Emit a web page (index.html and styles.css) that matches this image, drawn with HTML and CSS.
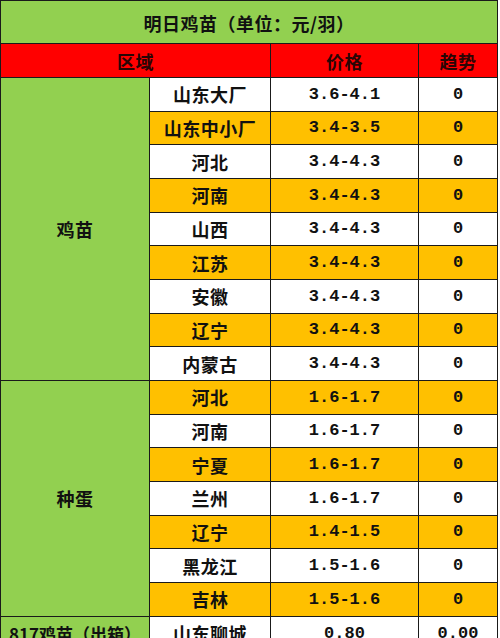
FILE: index.html
```html
<!DOCTYPE html>
<html lang="zh">
<head>
<meta charset="utf-8">
<title>明日鸡苗</title>
<link rel="stylesheet" href="styles.css">
</head>
<body>
<div class="sheet">
  <div class="cell title">明日鸡苗（单位：元/羽）</div>

  <div class="cell head span2">区域</div>
  <div class="cell head">价格</div>
  <div class="cell head">趋势</div>

  <div class="cell group g1">鸡苗</div>
  <div class="cell w">山东大厂</div><div class="cell w num">3.6-4.1</div><div class="cell w num">0</div>
  <div class="cell o">山东中小厂</div><div class="cell o num">3.4-3.5</div><div class="cell o num">0</div>
  <div class="cell w">河北</div><div class="cell w num">3.4-4.3</div><div class="cell w num">0</div>
  <div class="cell o">河南</div><div class="cell o num">3.4-4.3</div><div class="cell o num">0</div>
  <div class="cell w">山西</div><div class="cell w num">3.4-4.3</div><div class="cell w num">0</div>
  <div class="cell o">江苏</div><div class="cell o num">3.4-4.3</div><div class="cell o num">0</div>
  <div class="cell w">安徽</div><div class="cell w num">3.4-4.3</div><div class="cell w num">0</div>
  <div class="cell o">辽宁</div><div class="cell o num">3.4-4.3</div><div class="cell o num">0</div>
  <div class="cell w">内蒙古</div><div class="cell w num">3.4-4.3</div><div class="cell w num">0</div>

  <div class="cell group g2">种蛋</div>
  <div class="cell o">河北</div><div class="cell o num">1.6-1.7</div><div class="cell o num">0</div>
  <div class="cell w">河南</div><div class="cell w num">1.6-1.7</div><div class="cell w num">0</div>
  <div class="cell o">宁夏</div><div class="cell o num">1.6-1.7</div><div class="cell o num">0</div>
  <div class="cell w">兰州</div><div class="cell w num">1.6-1.7</div><div class="cell w num">0</div>
  <div class="cell o">辽宁</div><div class="cell o num">1.4-1.5</div><div class="cell o num">0</div>
  <div class="cell w">黑龙江</div><div class="cell w num">1.5-1.6</div><div class="cell w num">0</div>
  <div class="cell o">吉林</div><div class="cell o num">1.5-1.6</div><div class="cell o num">0</div>

  <div class="cell group tight">817鸡苗（出箱）</div>
  <div class="cell w">山东聊城</div><div class="cell w num">0.80</div><div class="cell w num">0.00</div>
</div>
</body>
</html>
```
FILE: styles.css
```css
html, body {
  margin: 0;
  padding: 0;
  background: #ffffff;
}

body {
  width: 500px;
  height: 638px;
  overflow: hidden;
  font-family: "Noto Sans CJK SC", "Noto Sans", sans-serif;
  font-weight: bold;
  color: #111;
}

.sheet {
  display: grid;
  grid-template-columns: 148px 120px 147px 78px;
  grid-template-rows: 42px 33px repeat(16, 32.67px) 33px;
  gap: 1px;
  padding: 1px;
  width: max-content;
  background: #1a1a1a;
}

.cell {
  display: flex;
  align-items: center;
  justify-content: center;
  font-size: 18px;
  letter-spacing: 0.5px;
  white-space: nowrap;
  overflow: hidden;
}

.title {
  grid-column: 1 / 5;
  background: #92d050;
  font-size: 18px;
  padding-top: 2px;
}

.head {
  background: #ff0000;
  color: #2a0505;
}

.span2 {
  grid-column: 1 / 3;
}

.group {
  background: #92d050;
}

.g1 {
  grid-row: span 9;
}

.g2 {
  grid-row: span 7;
}

.tight {
  font-size: 17px;
  letter-spacing: 0;
}

.w {
  background: #ffffff;
}

.o {
  background: #ffc000;
}

.num {
  font-family: "Liberation Mono", "DejaVu Sans Mono", monospace;
  font-size: 17px;
  letter-spacing: 0;
}
```
